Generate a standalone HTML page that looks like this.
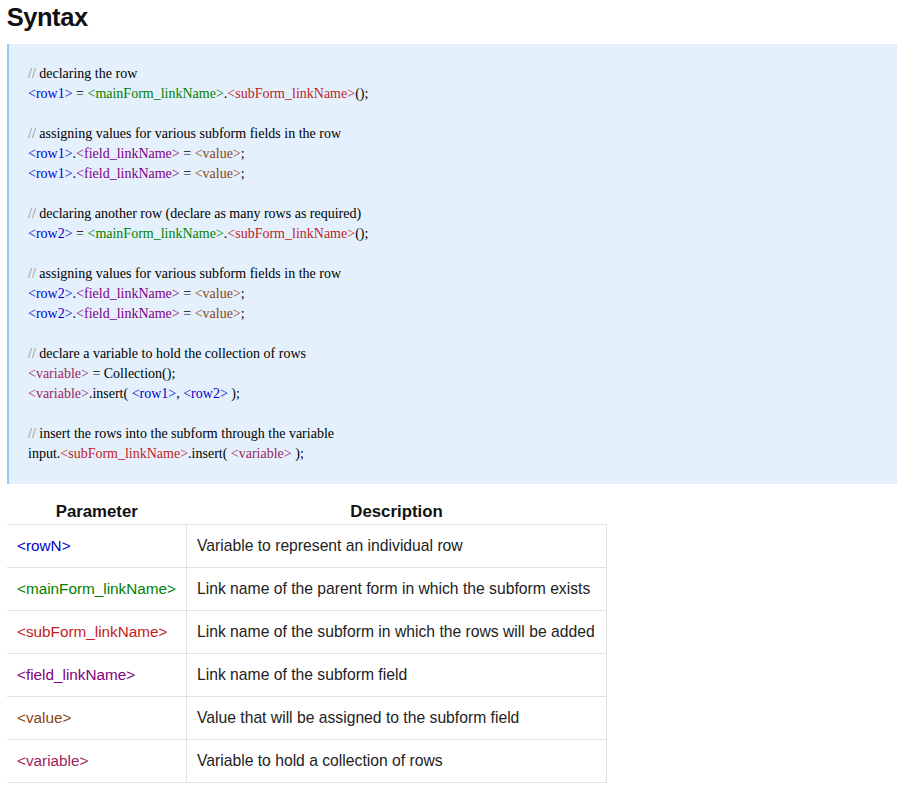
<!DOCTYPE html>
<html>
<head>
<meta charset="utf-8">
<style>
html,body{margin:0;padding:0;background:#fff;}
body{width:903px;height:789px;overflow:hidden;position:relative;}
h2{position:absolute;left:6.7px;top:-0.5px;margin:0;font-family:"Liberation Sans",sans-serif;font-weight:bold;font-size:25.5px;letter-spacing:-0.45px;line-height:34px;color:#111;}
.code{position:absolute;left:7px;top:44px;width:869px;height:400px;padding:20px 0 20px 19px;background:#e4f1fd;border-left:2px solid #96c9fb;font-family:"Liberation Serif",serif;font-size:14px;line-height:20px;color:#000;white-space:pre;}
.code div{height:20px;}
.cm{color:#888;}
.b{color:#0000cd;}
.g{color:#008000;}
.r{color:#c01c24;}
.p{color:#800080;}
.br{color:#8b4513;}
.v{color:#9c1f5e;}
table{position:absolute;left:7px;top:496px;border-collapse:collapse;font-family:"Liberation Sans",sans-serif;width:600px;}
th{font-weight:bold;font-size:16.8px;height:25px;padding:3px 0 0 0;text-align:center;color:#111;}
td{border:1px solid #e2e2e2;height:42px;padding:0 10px;font-size:15.3px;color:#222;}
td.d{font-size:15.7px;}
td:first-child{border-left:none;}
col.c1{width:179px;}
</style>
</head>
<body>
<h2>Syntax</h2>
<div class="code"><div><span class="cm">//</span> declaring the row</div><div><span class="b">&lt;row1&gt;</span> = <span class="g">&lt;mainForm_linkName&gt;</span>.<span class="r">&lt;subForm_linkName&gt;</span>();</div><div></div><div><span class="cm">//</span> assigning values for various subform fields in the row</div><div><span class="b">&lt;row1&gt;</span>.<span class="p">&lt;field_linkName&gt;</span> = <span class="br">&lt;value&gt;</span>;</div><div><span class="b">&lt;row1&gt;</span>.<span class="p">&lt;field_linkName&gt;</span> = <span class="br">&lt;value&gt;</span>;</div><div></div><div><span class="cm">//</span> declaring another row (declare as many rows as required)</div><div><span class="b">&lt;row2&gt;</span> = <span class="g">&lt;mainForm_linkName&gt;</span>.<span class="r">&lt;subForm_linkName&gt;</span>();</div><div></div><div><span class="cm">//</span> assigning values for various subform fields in the row</div><div><span class="b">&lt;row2&gt;</span>.<span class="p">&lt;field_linkName&gt;</span> = <span class="br">&lt;value&gt;</span>;</div><div><span class="b">&lt;row2&gt;</span>.<span class="p">&lt;field_linkName&gt;</span> = <span class="br">&lt;value&gt;</span>;</div><div></div><div><span class="cm">//</span> declare a variable to hold the collection of rows</div><div><span class="v">&lt;variable&gt;</span> = Collection();</div><div><span class="v">&lt;variable&gt;</span>.insert( <span class="b">&lt;row1&gt;</span>, <span class="b">&lt;row2&gt;</span> );</div><div></div><div><span class="cm">//</span> insert the rows into the subform through the variable</div><div>input.<span class="r">&lt;subForm_linkName&gt;</span>.insert( <span class="v">&lt;variable&gt;</span> );</div></div>
<table>
<colgroup><col class="c1"><col></colgroup>
<tr><th>Parameter</th><th>Description</th></tr>
<tr><td class="b">&lt;rowN&gt;</td><td class="d">Variable to represent an individual row</td></tr>
<tr><td class="g">&lt;mainForm_linkName&gt;</td><td class="d">Link name of the parent form in which the subform exists</td></tr>
<tr><td class="r">&lt;subForm_linkName&gt;</td><td class="d">Link name of the subform in which the rows will be added</td></tr>
<tr><td class="p">&lt;field_linkName&gt;</td><td class="d">Link name of the subform field</td></tr>
<tr><td class="br">&lt;value&gt;</td><td class="d">Value that will be assigned to the subform field</td></tr>
<tr><td class="v">&lt;variable&gt;</td><td class="d">Variable to hold a collection of rows</td></tr>
</table>
</body>
</html>
